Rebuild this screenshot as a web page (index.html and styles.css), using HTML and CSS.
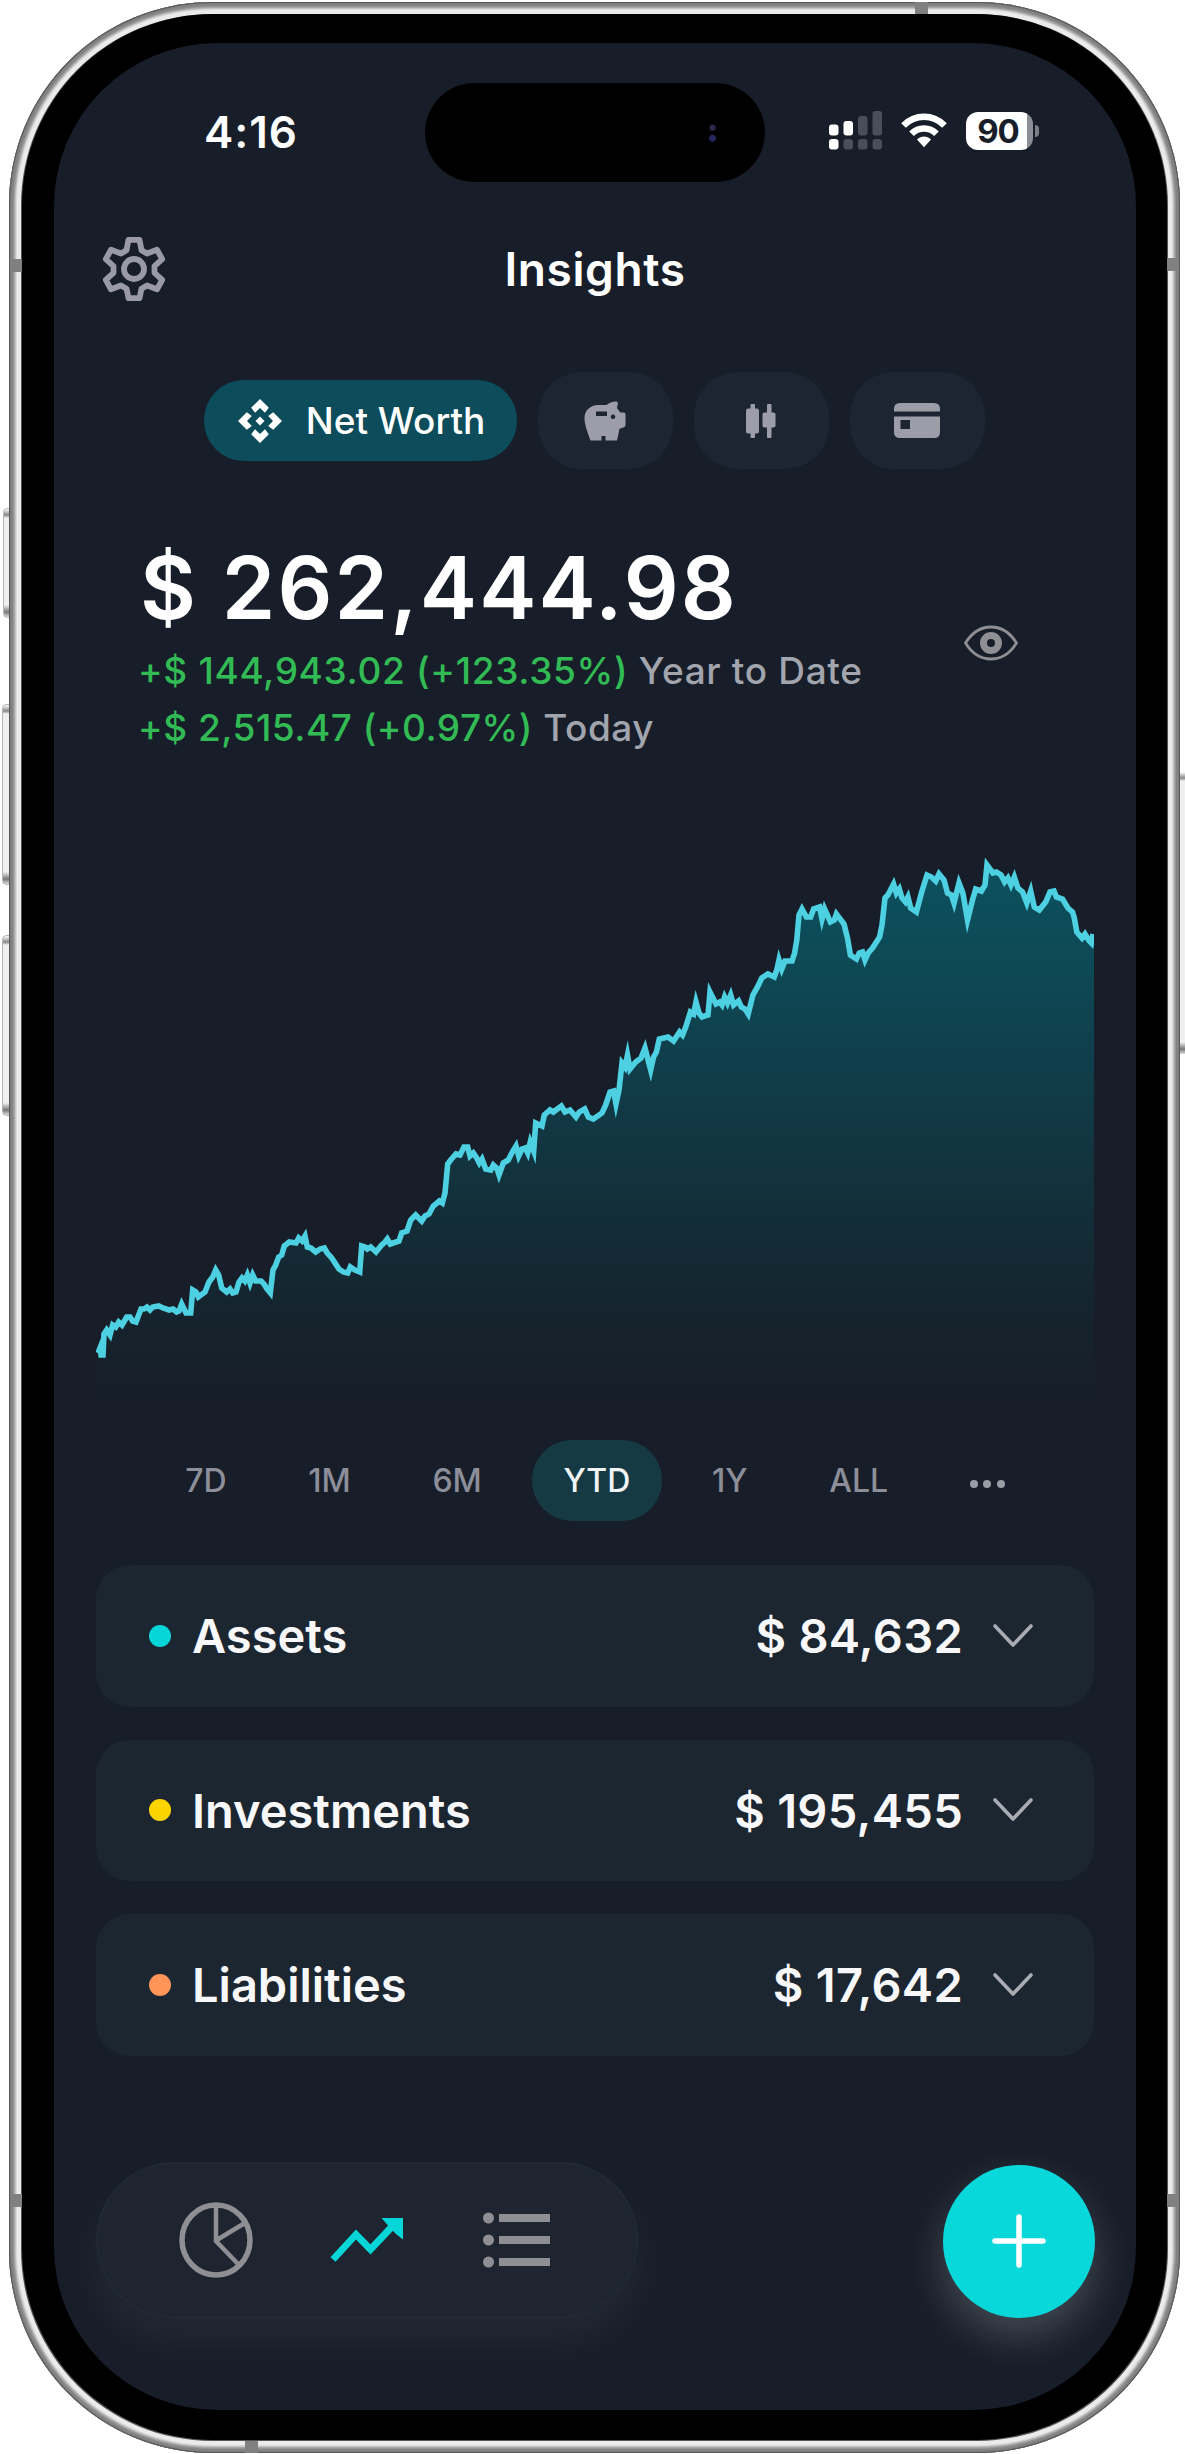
FILE: index.html
```html
<!DOCTYPE html>
<html lang="en">
<head>
  <meta charset="UTF-8">
  <meta name="viewport" content="width=device-width, initial-scale=1.0">
  <title>Insights</title>
  <link rel="stylesheet" href="styles.css">
</head>
<body>
  <div class="phone">
    <span class="side-btn action"></span>
    <span class="side-btn vol-up"></span>
    <span class="side-btn vol-down"></span>
    <span class="side-btn power"></span>
    <span class="band band-left-top"></span>
    <span class="band band-right-top"></span>
    <span class="band band-left-bottom"></span>
    <span class="band band-right-bottom"></span>
    <span class="band band-top"></span>
    <span class="band band-bottom"></span>

    <div class="bezel">
      <div class="screen">
        <div class="status-bar">
          <div class="time">4:16</div>
          <div class="island"><span class="lens"></span></div>
          <div class="status-icons">
            <svg class="signal" width="54" height="39" viewBox="0 0 54 39" fill="#fff">
              <rect x="0" y="13.500" width="9.500" height="11" rx="3"/>
              <rect x="14.500" y="10" width="9.500" height="14.500" rx="3"/>
              <rect x="29" y="5" width="9.500" height="19.500" rx="3" opacity=".22"/>
              <rect x="43.500" y="0" width="9.500" height="24.500" rx="3" opacity=".22"/>
              <rect x="0" y="28" width="9.500" height="10.500" rx="3"/>
              <rect x="14.500" y="28" width="9.500" height="10.500" rx="3" opacity=".22"/>
              <rect x="29" y="28" width="9.500" height="10.500" rx="3" opacity=".22"/>
              <rect x="43.500" y="28" width="9.500" height="10.500" rx="3" opacity=".22"/>
            </svg>
            <svg class="wifi" width="46" height="36" viewBox="0 0 46 36" fill="none" stroke="#fff" stroke-width="6.500">
              <path d="M2.500 12.500C14 .8 32 .8 43.500 12.500"/>
              <path d="M10.500 20.800C17.500 13.800 28.500 13.800 35.500 20.800"/>
              <path d="M16 26.500c4-4 10-4 14 0l-7 7.800z" fill="#fff" stroke="none"/>
            </svg>
            <div class="battery"><span>90</span></div>
          </div>
        </div>

        <header>
          <svg class="gear" width="64" height="64" viewBox="0 0 64 64" fill="none" stroke="#9a9aa6" stroke-width="5.800" stroke-linejoin="round">
            <path d="M26.500 2.800h11l2 10.500 5.500 3.200 10-3.800 5.200 9.500-7.700 7v6.600l7.700 7-5.200 9.500-10-3.800-5.500 3.200-2 9.500h-11l-2-9.500-5.500-3.200-10 3.800-5.200-9.500 7.700-7v-6.600l-7.700-7 5.200-9.500 10 3.800 5.500-3.200z"/>
            <circle cx="32" cy="32" r="10"/>
          </svg>
          <h1>Insights</h1>
        </header>

        <nav class="tabs">
          <a class="tab active">
            <svg width="44" height="44" viewBox="0 0 44 44" fill="#fff">
              <path d="M22 0l8.800 8.800-3.800 5-5-4.800-5 4.800-3.800-5z"/>
              <path d="M22 44l8.800-8.800-3.800-5-5 4.800-5-4.800-3.800 5z"/>
              <path d="M0 22l8.800-8.800 5 3.800-4.800 5 4.800 5-5 3.800z"/>
              <path d="M44 22l-8.800-8.800-5 3.800 4.800 5-4.800 5 5 3.800z"/>
              <path d="M22 17.500l4.500 4.500-4.500 4.500-4.500-4.500z"/>
            </svg>
            <span>Net Worth</span>
          </a>
          <a class="tab">
            <svg width="42" height="40" viewBox="0 0 42 40" fill="#9c9da8" fill-rule="evenodd">
              <path d="M14 4h8.500C25.500 1.500 29 .3 32 .5c1.800 0 2.200 1.500 1.700 3l-.7 3.600 3.200 4.400H39.500q2 0 2 2V24q0 1.600-1.500 2.200l-4.500 1.600L33 39.500H21.500V35h-4v4.500H6.500C3.500 31 .5 24 .5 17 .5 9.500 6.500 4 14 4zM12 10.500v4.500h11v-4.500zM29 13.500a2.300 2.300 0 1 0 .01 0z"/>
            </svg>
          </a>
          <a class="tab">
            <svg width="30" height="34" viewBox="0 0 30 34" fill="#9c9da8">
              <rect x="4.500" y="0" width="4.500" height="34" rx="1"/>
              <rect x="0" y="4.500" width="13" height="25" rx="2"/>
              <rect x="21" y="0" width="4.500" height="34" rx="1"/>
              <rect x="16.500" y="8.500" width="13" height="15" rx="2"/>
            </svg>
          </a>
          <a class="tab">
            <svg width="46" height="35" viewBox="0 0 46 35" fill="#9c9da8" fill-rule="evenodd">
              <path d="M6 0h34q6 0 6 6v2.500H0V6q0-6 6-6z"/>
              <path d="M0 13.500h46V29q0 6-6 6H6q-6 0-6-6zM6.500 17v9H16V17z"/>
            </svg>
          </a>
        </nav>

        <section class="summary">
          <div>
            <div class="amount">$ 262,444.98</div>
            <p class="change"><b>+$ 144,943.02 (+123.35%)</b> Year to Date</p>
            <p class="change today"><b>+$ 2,515.47 (+0.97%)</b> Today</p>
          </div>
          <svg class="eye" width="54" height="36" viewBox="0 0 54 36">
            <path d="M1.500 18C8 7.500 17 2 27 2s19 5.500 25.500 16C46 28.500 37 34 27 34S8 28.500 1.500 18z" fill="none" stroke="#8e8e93" stroke-width="2.800"/>
            <path d="M27 7a11 11 0 1 0 0 22 11 11 0 0 0 0-22zm0 7a4 4 0 1 1 0 8 4 4 0 0 1 0-8z" fill="#8e8e93" fill-rule="evenodd"/>
          </svg>
        </section>

        <svg class="chart" width="998" height="550" viewBox="0 0 998 550">
          <defs>
            <linearGradient id="fill" x1="0" y1="0" x2="0" y2="1">
              <stop offset="0" stop-color="#0c515f"/>
              <stop offset=".2" stop-color="#0e4855"/>
              <stop offset=".57" stop-color="#12333e"/>
              <stop offset=".85" stop-color="#15232d"/>
              <stop offset="1" stop-color="#171e29"/>
            </linearGradient>
          </defs>
          <path id="area" fill="url(#fill)"/>
          <path id="line" fill="none" stroke="#4dd0e1" stroke-width="5.600" stroke-miterlimit="6"/>
        </svg>

        <div class="ranges">
          <a>7D</a>
          <a>1M</a>
          <a>6M</a>
          <a class="active">YTD</a>
          <a>1Y</a>
          <a>ALL</a>
          <a class="more"><i></i><i></i><i></i></a>
        </div>

        <section class="cards" id="cards"></section>

        <footer>
          <nav class="bottom-nav">
            <svg class="pie" width="74" height="76" viewBox="0 0 74 76" fill="none" stroke="#8e8e93">
              <ellipse cx="37" cy="38" rx="34" ry="35" stroke-width="5.500"/>
              <path d="M37 3v36l23 24M37 38.500l28-17" stroke-width="4.500"/>
            </svg>
            <svg class="trend" width="74" height="56" viewBox="0 4.500 74 56">
              <path d="M3 52L26 27l14.500 15L64 17" fill="none" stroke="#06d6d8" stroke-width="7"/>
              <path d="M51.500 10.500H73V32L66 26.500l-7.500-8z" fill="#06d6d8"/>
            </svg>
            <svg class="list" width="68" height="56" viewBox="0 0 68 56" fill="#8e8e93">
              <circle cx="5.500" cy="6" r="5.500"/><rect x="16" y="2" width="51" height="8"/>
              <circle cx="5.500" cy="28" r="5.500"/><rect x="16" y="24" width="51" height="8"/>
              <circle cx="5.500" cy="50" r="5.500"/><rect x="16" y="46" width="51" height="8"/>
            </svg>
          </nav>
          <button class="add">
            <svg width="54" height="54" viewBox="0 0 54 54" stroke="#fff" stroke-width="5.500" stroke-linecap="round">
              <path d="M27 3v48M3 27h48"/>
            </svg>
          </button>
        </footer>
      </div>
    </div>
  </div>

  <script>
    // Net worth series as x,y pairs in chart units
    const points = `2,503 4,498 5,505 7,505 8,484 10.7,480 14,485 16.7,475 19.7,477 22.7,472 26,475 30.7,467 34,467
      36.7,471 40,472 45,459 48,459 51,457 54,460 56.7,457 62.7,456 67,458 73,460 77,459 80.7,462 83,461
      85.7,454 90,463 94.7,463 96.7,440 100,442 102.3,447 109,442 113,432 116.7,427 119.7,420 122.7,425
      125.7,438 130.7,442 134,439 136.7,443 140,442 143,432 146,428 148.7,431 151.3,425 154,433 156.7,425
      159.7,431 165,431 168,434 171,439 174.3,443 177,420 179.3,416 182.7,407 185.7,405 188.3,396 193.3,392
      200,393 202.7,388 206,391 209,386 211.3,397 215,398 219.7,402 224,399 228.3,398 231.3,403 235.7,408
      243,419 247.3,422 251.7,423 254.3,417 259,420 263.7,422 265.7,396 269,397 271.3,399 274.7,397 280,402
      285.7,395 289,392 291.3,389 294.3,394 303,391 305.7,383 311,381 314.7,370 319.7,365 325.7,371 329,366
      333,364 337.3,356 343.3,351 346.3,353 349,343 351.7,314 354.7,310 360,304 364,305 368,297 371.7,297
      374,306 377.3,303 380.7,308 383.3,313 386,309 389.7,319 394.7,320 397.3,315 400.7,318 403,325
      407.3,313 412.3,310 416.3,302 420,296 422.7,306 426,299 429.3,298 431.7,303 434.3,292 437.7,301
      439.7,273 446,276 448.3,265 454,260 457.3,262 465.3,256 469,262 474,260 480,267 483.3,262 488.7,259
      492.3,267 497.3,269 506,263 509.7,255 514,242 517.6,241 520,254 523,240 526,213 529,217 531.5,205
      534,219 539.7,212 545,208 549,198 554.7,220 557.6,207 560.4,202 563.3,189 572,187 577.6,191 583.6,182
      586.5,185 589.7,177 594.4,162 597.6,164 600,152 603,163 606,167 612,165 614,142 620,154 623.6,152
      626,155 628.6,147 631.5,153 634.7,145 637.6,155 642.6,151 645.4,157 649,159 652.2,164 656.9,145
      661.5,137 665.8,128 671.9,124 678.3,127 680.8,120 683,110 685.8,119 689,111 696,111 698.6,103 700.8,90
      703,65 706,59 710.4,67 714.7,67 717.6,59 723.6,57 726,69 728.6,59 734.4,72 738.3,70 740.4,64 748,74
      751.5,88 754.4,105 760.4,109 763.3,103 766.5,102 769,110 772.2,103 776.5,98 783.6,87 786,75 789,48
      791.9,45 797.6,34 800.4,43 803.3,39 806,48 809.4,52 811.9,47 814.7,58 820.4,62 825.4,43 831,25
      835.4,27 839.7,31 843,24 848,30 851.5,43 855.4,45 858,53 863,33 866.9,43 871.5,70 876.5,50
      879.7,39 885.4,41 889,35 891,15 896.9,23 900.4,22 905,25 908.6,32 911.9,28 915,35 918.3,27 921.9,38
      926.5,42 930.8,53 934.7,41 938.3,57 943.3,60 949.7,52 954,42 958,41 960.4,47 966.5,49 971.9,58
      976.5,62 978.3,68 980.8,82 986,88 989,84 992.6,90 995.4,93 997,84`;
    document.getElementById('line').setAttribute('d', 'M' + points);
    document.getElementById('area').setAttribute('d', 'M2,503 L' + points + ' L998,84 V550 H2 Z');

    const groups = [
      { name: 'Assets', value: '$ 84,632', color: '#06d6d8' },
      { name: 'Investments', value: '$ 195,455', color: '#fcd500' },
      { name: 'Liabilities', value: '$ 17,642', color: '#ff9558' }
    ];
    const cards = document.getElementById('cards');
    groups.forEach(g => {
      const card = document.createElement('div');
      card.className = 'card';
      card.innerHTML = `
        <span class="dot" style="background:${g.color}"></span>
        <span class="name">${g.name}</span>
        <span class="value">${g.value}</span>
        <svg width="40" height="24" viewBox="0 0 40 24" fill="none" stroke="#a9acb3" stroke-width="3.600" stroke-linecap="round" stroke-linejoin="round">
          <path d="M2 2l18 19L38 2"/>
        </svg>
      `;
      cards.appendChild(card);
    });
  </script>
</body>
</html>
```
FILE: styles.css
```css
* { box-sizing:border-box; }
body { margin:0; padding:2px 0 0 9px; background:#fff; color:#fff; font-family:Inter, "Liberation Sans", sans-serif; height:2454px; overflow:hidden; }
h1, p { margin:0; font-weight:500; }

/* Phone body */
.phone { position:relative; width:1171px; height:2451px; padding:12px 13px; border-radius:203px; background:#555;
  box-shadow:inset 0 0 0 1px #5a5a5a, inset 0 0 0 2px #7c7c7c, inset 0 0 0 4px #848484, inset 0 0 0 5px #969696, inset 0 0 0 6px #a8a8a8, inset 0 0 0 7px #c4c4c4, inset 0 0 0 8px #dcdcdc, inset 0 0 0 12px #ebebeb; }
.bezel { width:1145px; height:2426px; padding:29px 31px 30px 32px; border-radius:191px; background:#000; }
.screen { width:1082px; height:2367px; padding:0 42px; border-radius:163px; background:#171e29; overflow:hidden; }
.side-btn { position:absolute; left:-7px; width:7px; border:1px solid #b5b5b5; border-right:0; border-radius:5px 0 0 5px; background:linear-gradient(#fff, #888 6px, #f0f0f0 9px, #f0f0f0 calc(100% - 12px), #777 calc(100% - 5px), #ddd); }
.action { top:506px; height:110px; left:-6px; width:6px; }
.vol-up { top:702px; height:181px; }
.vol-down { top:933px; height:181px; }
.power { top:770px; height:282px; left:1171px; border:0; border-radius:0; }
.band { position:absolute; background:#808080; }
.band-left-top, .band-right-top, .band-left-bottom, .band-right-bottom { width:12px; height:13px; }
.band-left-top { left:1px; top:257px; }
.band-right-top { right:1px; top:256px; }
.band-left-bottom { left:1px; top:2192px; }
.band-right-bottom { right:1px; top:2192px; }
.band-top, .band-bottom { width:13px; height:12px; }
.band-top { left:906px; top:0; }
.band-bottom { left:236px; bottom:0; }

/* Status bar */
.status-bar { display:grid; grid-template-columns:329px 340px 1fr; align-items:center; height:139px; padding-top:39px; }
.time { padding-left:108px; font-size:44px; font-weight:600; line-height:96px; letter-spacing:.9px; }
.island { height:99px; border-radius:50px; background:#000; display:flex; align-items:center; justify-content:flex-end; padding-right:49px; }
.lens { width:7px; height:19px; background:radial-gradient(circle at 50% 25%, #2b2c52 0 2px, transparent 4px), radial-gradient(circle at 50% 80%, #25265a 0 3px, transparent 4px); }
.status-icons { display:flex; align-items:center; padding:0 0 3px 64px; }
.wifi { margin-left:18px; }
.battery { position:relative; margin-left:19px; width:67px; height:38px; border-radius:12px; background:linear-gradient(90deg, #fff 61px, #8b8e94 61px); color:#171e29; font-size:33px; font-weight:700; line-height:39px; text-align:center; padding-right:3px; letter-spacing:-1px; }
.battery::after { content:''; position:absolute; right:-6px; top:13px; width:4px; height:12px; border-radius:0 4px 4px 0; background:#7b7e85; }

header { position:relative; display:flex; align-items:center; justify-content:center; height:64px; margin-top:55px; }
.gear { position:absolute; left:6px; top:0; }
header h1 { font-size:46px; font-weight:600; line-height:66px; letter-spacing:.6px; }

/* Section tabs */
.tabs { display:flex; align-items:center; justify-content:center; gap:21.5px; height:97px; margin-top:71px; padding-right:2px; }
.tab { display:flex; align-items:center; justify-content:center; width:134.5px; height:97px; border-radius:44px; background:#1c2531; }
.tab.active { width:313px; height:81px; padding-left:3px; border-radius:40px; background:#0d4c5a; gap:24px; font-size:37px; font-weight:500; white-space:nowrap; }

.summary { display:flex; align-items:flex-start; justify-content:space-between; margin-top:70px; padding:0 76px 0 44px; }
.amount { font-size:86px; font-weight:600; line-height:98px; margin-bottom:5px; letter-spacing:2.1px; white-space:nowrap; }
.change { font-size:37px; line-height:57px; color:#a2a5ad; letter-spacing:.66px; white-space:nowrap; margin-left:-2px; }
.change.today { letter-spacing:.5px; }
.change b { font-weight:500; color:#32bb55; }
.eye { margin-top:86px; }

.chart { display:block; margin-top:94px; }

/* Time ranges */
.ranges { display:flex; justify-content:center; gap:17.7px; margin-top:40px; }
.ranges a { padding:0 32px; height:81px; border-radius:40px; color:#8c8e99; font-size:32px; font-weight:500; line-height:81px; }
.ranges .active { background:#153a43; color:#f2f4f5; }
.ranges .more { display:flex; align-items:center; gap:5.5px; padding-top:6px; }
.more i { width:8px; height:8px; border-radius:50%; background:#9a9ca6; }

.cards { display:flex; flex-direction:column; gap:33px; margin-top:44px; }
.card { display:flex; align-items:center; height:141.5px; padding:0 61px 0 53px; border-radius:34px; background:#1c2631; color:#f8f8fa; font-size:47px; font-weight:600; }
.dot { width:22px; height:22px; border-radius:50%; margin-right:21px; }
.value { margin-left:auto; margin-right:30px; letter-spacing:.3px; }

/* Bottom bar */
footer { display:flex; justify-content:space-between; align-items:center; margin-top:106px; height:156px; }
.bottom-nav { display:flex; align-items:center; width:542px; height:156px; padding-left:81px; border:2px solid #222934; border-radius:78px; background:#1e2531; box-shadow:0 22px 40px rgba(255,255,255,.05); }
.trend { margin-left:77px; }
.list { margin-left:79px; }
.add { display:flex; align-items:center; justify-content:center; width:152px; height:153px; padding:0; border:0; border-radius:50%; background:#08d8d9; box-shadow:0 18px 40px rgba(255,255,255,.2); margin-top:3px; margin-right:-1px; }
```
